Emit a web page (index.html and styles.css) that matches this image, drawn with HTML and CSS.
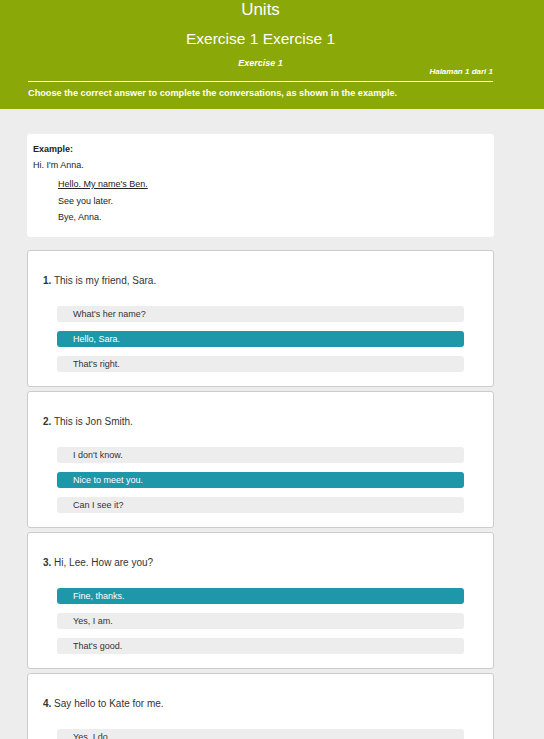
FILE: index.html
```html
<!DOCTYPE html>
<html>
<head>
<meta charset="utf-8">
<link rel="stylesheet" href="styles.css">
</head>
<body>
<header class="header">
  <div class="header-inner">
    <h1 class="title">Units</h1>
    <h2 class="subtitle">Exercise 1 Exercise 1</h2>
    <div class="exname">Exercise 1</div>
    <div class="page">Halaman 1 dari 1</div>
    <div class="instructions">Choose the correct answer to complete the conversations, as shown in the example.</div>
  </div>
</header>
<main class="main">
  <section class="example">
    <div class="ex-label">Example:</div>
    <div class="ex-line">Hi. I'm Anna.</div>
    <ul class="ex-options">
      <li class="ex-answer">Hello. My name's Ben.</li>
      <li>See you later.</li>
      <li>Bye, Anna.</li>
    </ul>
  </section>

  <section class="card">
    <p class="question"><b>1.</b> This is my friend, Sara.</p>
    <div class="options">
      <div class="option">What's her name?</div>
      <div class="option selected">Hello, Sara.</div>
      <div class="option">That's right.</div>
    </div>
  </section>

  <section class="card">
    <p class="question"><b>2.</b> This is Jon Smith.</p>
    <div class="options">
      <div class="option">I don't know.</div>
      <div class="option selected">Nice to meet you.</div>
      <div class="option">Can I see it?</div>
    </div>
  </section>

  <section class="card">
    <p class="question"><b>3.</b> Hi, Lee. How are you?</p>
    <div class="options">
      <div class="option selected">Fine, thanks.</div>
      <div class="option">Yes, I am.</div>
      <div class="option">That's good.</div>
    </div>
  </section>

  <section class="card">
    <p class="question"><b>4.</b> Say hello to Kate for me.</p>
    <div class="options">
      <div class="option">Yes, I do.</div>
      <div class="option">Thanks, I will.</div>
      <div class="option">See you soon.</div>
    </div>
  </section>
</main>
</body>
</html>
```

FILE: styles.css
```css
* { box-sizing: border-box; }

body {
  margin: 0;
  background: #ededed;
  font-family: "Liberation Sans", Arial, sans-serif;
  color: #333;
}

.header {
  background: #8aa808;
  height: 109px;
  color: #fff;
}

.header-inner {
  margin-left: 28px;
  width: 465px;
}

.title {
  margin: 0;
  font-size: 17px;
  font-weight: normal;
  line-height: 19px;
  text-align: center;
}

.subtitle {
  margin: 10px 0 0;
  font-size: 15.5px;
  font-weight: normal;
  line-height: 20px;
  text-align: center;
}

.exname {
  margin-top: 9px;
  font-size: 9px;
  font-weight: bold;
  font-style: italic;
  line-height: 11px;
  text-align: center;
}

.page {
  margin-top: -2px;
  font-size: 8px;
  font-weight: bold;
  font-style: italic;
  line-height: 10px;
  text-align: right;
  padding-bottom: 4px;
  border-bottom: 1px solid #fff;
}

.instructions {
  margin-top: 6px;
  font-size: 9.2px;
  font-weight: bold;
  line-height: 11px;
}

.main {
  padding: 25px 0 0 27px;
  width: 494px;
}

.example {
  background: #fff;
  border-radius: 3px;
  padding: 8px 6px 11px 6px;
  font-size: 9px;
  color: #222;
  margin-bottom: 13px;
}

.ex-label {
  font-weight: bold;
  line-height: 15px;
}

.ex-line {
  line-height: 16px;
}

.ex-options {
  list-style: none;
  margin: 3px 0 0;
  padding: 0 0 0 25px;
}

.ex-options li {
  line-height: 16.5px;
}

.ex-answer {
  text-decoration: underline;
}

.card {
  background: #fff;
  border: 1px solid #ccc;
  border-radius: 3px;
  padding: 23px 29px 14px 29px;
  margin-bottom: 4px;
  height: 137px;
}

.question {
  margin: 0 0 18px -14px;
  font-size: 10px;
  line-height: 14px;
  color: #333;
}

.question b {
  font-weight: bold;
}

.options {
  display: flex;
  flex-direction: column;
  gap: 9px;
}

.option {
  height: 16px;
  line-height: 16px;
  background: #ededed;
  border-radius: 3px;
  padding-left: 16px;
  font-size: 9px;
  color: #333;
}

.option.selected {
  background: #1e97a8;
  color: #fff;
}
```
